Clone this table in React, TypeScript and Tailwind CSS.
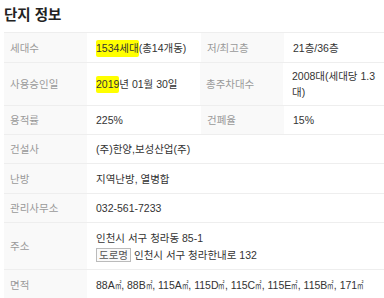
const font = { fontFamily: '"Liberation Sans", Arial, "Noto Sans CJK KR", sans-serif' };

function Label({ children }: { children: React.ReactNode }) {
  return (
    <div className="w-[83px] shrink-0 bg-[#f9f9f9] px-[6px] flex items-center text-[#999]">{children}</div>
  );
}

function Value({ children, className = "" }: { children: React.ReactNode; className?: string }) {
  return <div className={`px-[9px] flex flex-col justify-center text-[#333] ${className}`}>{children}</div>;
}

function Mark({ children }: { children: React.ReactNode }) {
  return <span className="bg-[#ffff00] rounded-[2px] pt-[2px] pb-[3px]">{children}</span>;
}

// narrow square-metre sign, as in the source page
function Sqm() {
  return (
    <span className="inline-block w-[6.5px] whitespace-nowrap">
      <span className="inline-block origin-left scale-x-[0.62]">㎡</span>
    </span>
  );
}

const areas = ["88A", "88B", "115A", "115D", "115C", "115E", "115B", "171"];

export default function App() {
  return (
    <div className="w-[384px] h-[298px] overflow-hidden bg-white text-[10.5px] leading-[16px]" style={font}>
      <h2 className="pl-[4px] pt-[7px] h-[32px] text-[14.5px] font-bold text-[#222] leading-[17px]">단지 정보</h2>
      <div className="ml-[4px] w-[380px] border-t border-[#eee]">
        <div className="flex h-[30px] border-b border-[#eee]">
          <Label>세대수</Label>
          <Value className="w-[114px]">
            <span><Mark>1534세대</Mark>(총14개동)</span>
          </Value>
          <Label>저/최고층</Label>
          <Value className="flex-1">21층/36층</Value>
        </div>
        <div className="flex h-[43px] border-b border-[#eee]">
          <Label>사용승인일</Label>
          <Value className="w-[114px]">
            <span><Mark>2019</Mark>년 01월 30일</span>
          </Value>
          <Label>총주차대수</Label>
          <Value className="flex-1 whitespace-nowrap">
            <span>2008대(세대당 1.3<br />대)</span>
          </Value>
        </div>
        <div className="flex h-[29px] border-b border-[#eee]">
          <Label>용적률</Label>
          <Value className="w-[114px]">225%</Value>
          <Label>건폐율</Label>
          <Value className="flex-1">15%</Value>
        </div>
        <div className="flex h-[29px] border-b border-[#eee]">
          <Label>건설사</Label>
          <Value className="flex-1">(주)한양,보성산업(주)</Value>
        </div>
        <div className="flex h-[30px] border-b border-[#eee]">
          <Label>난방</Label>
          <Value className="flex-1">지역난방, 열병합</Value>
        </div>
        <div className="flex h-[29px] border-b border-[#eee]">
          <Label>관리사무소</Label>
          <Value className="flex-1">032-561-7233</Value>
        </div>
        <div className="flex h-[47px] border-b border-[#eee]">
          <Label>주소</Label>
          <Value className="flex-1 gap-[1px]">
            <span>인천시 서구 청라동 85-1</span>
            <span>
              <span className="inline-block border border-[#bbb] bg-[#fafafa] text-[#555] leading-[12px] px-[2px] mr-[3px]">도로명</span>
              인천시 서구 청라한내로 132
            </span>
          </Value>
        </div>
        <div className="flex h-[30px] border-b border-[#eee]">
          <Label>면적</Label>
          <Value className="flex-1 whitespace-nowrap">
            <span>
              {areas.map((a, i) => (
                <span key={a}>
                  {a}
                  <Sqm />
                  {i < areas.length - 1 ? ", " : ""}
                </span>
              ))}
            </span>
          </Value>
        </div>
      </div>
    </div>
  );
}
